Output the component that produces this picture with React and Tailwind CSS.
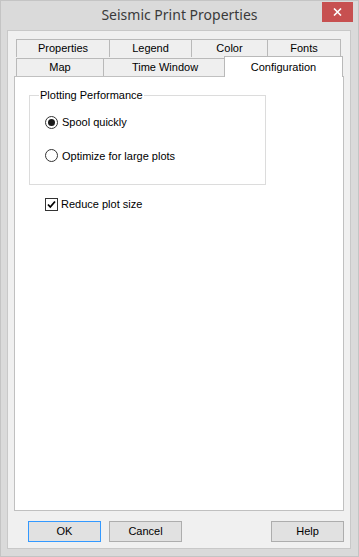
import React from 'react'

const ui = { fontFamily: '"Liberation Sans", Arial, sans-serif' }

const Tab = ({ label, w, h = 'h-[18px]' }) => (
    <div
        className={`${w} ${h} -ml-px first:ml-0 flex items-center justify-center border border-b-0 border-[#b9b9b9] bg-[#efefef] text-[11px] text-black`}
    >
        {label}
    </div>
)

const Button = ({ label, focused, className = '' }) => (
    <button
        className={`w-[73px] h-[21px] text-[11px] text-black bg-[#e1e1e1] border ${
            focused ? 'border-[#3399ff]' : 'border-[#adadad]'
        } ${className}`}
        style={ui}
    >
        {label}
    </button>
)

const App = () => {
    return (
        <div
            className="w-[359px] h-[557px] bg-[#dadada] border border-[#c4c4c4] flex flex-col pl-[6px] pr-[7px] pb-[7px]"
            style={ui}
        >
            {/* title bar */}
            <div className="relative h-[29px] shrink-0 flex items-center justify-center">
                <span
                    className="text-[14px] text-[#3a3a3a] -mt-[2px] ml-[1px]"
                    style={{ fontFamily: '"Noto Sans", "Open Sans", sans-serif' }}
                >
                    Seismic Print Properties
                </span>
                <div className="absolute right-[-2px] top-[1px] w-[31px] h-[20px] bg-[#c75050] flex items-center justify-center">
                    <svg width="9" height="8" viewBox="0 0 9 8">
                        <path d="M1 0.5 L8 7.5 M8 0.5 L1 7.5" stroke="#fff" strokeWidth="1.6" />
                    </svg>
                </div>
            </div>

            {/* client area */}
            <div className="flex-1 flex flex-col bg-[#f0f0f0] border border-[#c8c8c8] pt-[9px] pb-[6px]">
                <div className="ml-[6px] w-[330px] flex flex-col">
                    <div className="flex pl-[2px] h-[17px] items-end">
                        <Tab label="Properties" w="w-[94px]" />
                        <Tab label="Legend" w="w-[83px]" />
                        <Tab label="Color" w="w-[77px]" />
                        <Tab label="Fonts" w="w-[74px]" />
                    </div>
                    <div className="flex pl-[2px] h-[19px] items-end">
                        <Tab label="Map" w="w-[88px]" />
                        <Tab label="Time Window" w="w-[124px]" />
                        <div className="relative z-10 -ml-[3px] -mb-px w-[119px] h-[21px] flex items-start justify-center pt-[2px] border border-b-0 border-[#b9b9b9] bg-white text-[11px] text-black">
                            Configuration
                        </div>
                    </div>

                    {/* page */}
                    <div className="h-[435px] bg-white border border-[#c0c0c0] pt-[12px] pl-[14px]">
                        <fieldset className="w-[237px] h-[96px] border border-[#dcdcdc] px-[8px]">
                            <legend className="ml-[1px] px-[1px] text-[11px] text-black leading-[13px]">
                                Plotting Performance
                            </legend>
                            <div className="flex flex-col gap-[17px] mt-[12px] pl-[7px]">
                                <label className="flex items-center gap-[4px] text-[11px] text-black">
                                    <span className="w-[13px] h-[13px] rounded-full border border-[#333] bg-white flex items-center justify-center">
                                        <span className="w-[7px] h-[7px] rounded-full bg-[#1a1a1a]" />
                                    </span>
                                    Spool quickly
                                </label>
                                <label className="flex items-center gap-[4px] text-[11px] text-black">
                                    <span className="w-[13px] h-[13px] rounded-full border border-[#333] bg-white" />
                                    Optimize for large plots
                                </label>
                            </div>
                        </fieldset>
                        <label className="mt-[11px] ml-[16px] flex items-center gap-[3px] text-[11px] text-black">
                            <span className="w-[13px] h-[13px] border border-[#333] bg-white flex items-center justify-center">
                                <svg width="9" height="9" viewBox="0 0 9 9">
                                    <path d="M1 4.5 L3.3 7 L8 1.5" fill="none" stroke="#000" strokeWidth="1.8" />
                                </svg>
                            </span>
                            Reduce plot size
                        </label>
                    </div>
                </div>

                <div className="mt-auto flex items-end pl-[20px] pr-[6px] gap-[8px]">
                    <Button label="OK" focused />
                    <Button label="Cancel" />
                    <Button label="Help" className="ml-auto" />
                </div>
            </div>
        </div>
    )
}

export default App
